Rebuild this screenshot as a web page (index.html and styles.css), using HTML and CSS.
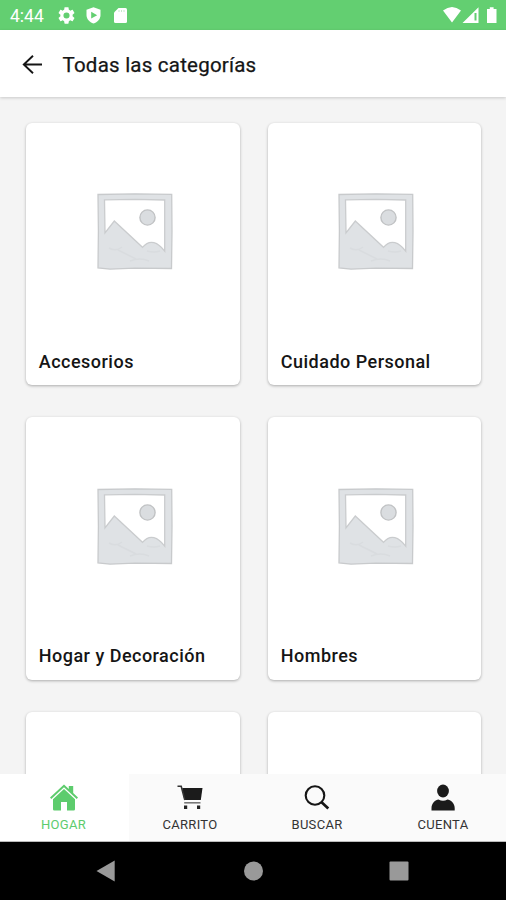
FILE: index.html
```html
<!DOCTYPE html>
<html lang="es">
<head>
<meta charset="utf-8">
<title>Todas las categorías</title>
<link rel="stylesheet" href="styles.css">
</head>
<body>
<svg class="defs" width="0" height="0" aria-hidden="true">
  <symbol id="placeholder" viewBox="0 0 76 77">
    <path d="M1 1.500 38 .8 74.700 1.300 75 38 74.500 75.500 38 75.200 13 76.200 1 74.800 1.400 38Z" fill="#dfe2e5" stroke="#c8cacc" stroke-width="1.300"/>
    <path d="M7.500 6.800 38 6.300 67.700 7V58.200C61 49.500 53 45.500 45.500 54.300L17.300 28 8 39.800Z" fill="#fff" stroke="#caccce" stroke-width="1.300"/>
    <circle cx="50.500" cy="24.500" r="7.600" fill="#dadde0" stroke="#c0c2c4" stroke-width="1.400"/>
    <path d="M12 55q7 4 13-1m8 14q10-4 19 0m-31-11 18 9m11-8q7 2 13 0" fill="none" stroke="#d9dcdf" stroke-width="1.500"/>
  </symbol>
</svg>
<div class="screen">
  <header class="status">
    <span class="clock">4:44</span>
    <svg class="gear" viewBox="2 2 20 20"><path fill="#fff" d="M19.140 12.940c.04-.3.060-.61.060-.94s-.02-.64-.07-.94l2.030-1.580c.18-.14.230-.41.120-.61l-1.920-3.320c-.12-.22-.37-.29-.59-.22l-2.390.96c-.5-.38-1.030-.7-1.620-.94L14.400 2.810c-.04-.24-.24-.41-.48-.41h-3.840c-.24 0-.43.170-.47.410l-.36 2.540c-.59.240-1.130.570-1.620.94l-2.390-.96c-.22-.08-.47 0-.59.220L2.740 8.870c-.12.210-.08.470.120.610l2.030 1.580c-.05.3-.09.630-.09.940s.02.640.070.940l-2.030 1.580c-.18.140-.23.410-.12.610l1.920 3.320c.12.220.370.290.590.220l2.390-.96c.5.380 1.030.7 1.620.94l.36 2.540c.05.240.240.410.480.410h3.840c.24 0 .44-.17.470-.41l.36-2.540c.59-.24 1.130-.56 1.620-.94l2.390.96c.22.080.470 0 .59-.22l1.920-3.320c.12-.22.070-.47-.12-.61zM12 15.600A3.600 3.600 0 1 1 12 8.400a3.600 3.600 0 0 1 0 7.200z"/></svg>
    <svg class="shield" viewBox="0 0 15 17"><path fill="#fff" d="M7.500.3 14.500 2.800V8C14.500 12 11.500 15.300 7.500 16.500 3.500 15.300.5 12 .5 8V2.800Z"/><path fill="#63cf71" d="m5.200 4.800 6 3.400-6 3.400Z"/></svg>
    <svg class="sd" viewBox="0 0 13 15"><path fill="#fff" d="M4.500 0H11.500Q13 0 13 1.500V13.500Q13 15 11.500 15H1.500Q0 15 0 13.500V4.500Z"/><path d="M5 2v2M7.500 2v2M10 2v2" stroke="#c4ebc9"/></svg>
    <svg class="signals" viewBox="0 0 55 17"><path fill="#fff" d="M0 3.500Q9-3.500 18 3.500L9 15.500ZM19.500 16 35.500.3V16Z"/><path d="M32.500 6v7.500" stroke="#63cf71" stroke-width="2"/><path fill="#fff" d="M44 2H46.800V.3H50.600V2H53.500V16H44Z"/></svg>
  </header>
  <div class="appbar">
    <svg class="back" viewBox="0 0 21 20"><path d="M20 9.500H1.500M11 .8 1.800 9.500l9.200 8.700" fill="none" stroke="#151515" stroke-width="1.900"/></svg>
    <h1>Todas las categorías</h1>
  </div>
  <main class="grid">
    <article class="card"><div class="thumb"><svg><use href="#placeholder"/></svg></div><h2>Accesorios</h2></article>
    <article class="card"><div class="thumb"><svg><use href="#placeholder"/></svg></div><h2>Cuidado Personal</h2></article>
    <article class="card"><div class="thumb"><svg><use href="#placeholder"/></svg></div><h2>Hogar y Decoración</h2></article>
    <article class="card"><div class="thumb"><svg><use href="#placeholder"/></svg></div><h2>Hombres</h2></article>
    <article class="card"></article>
    <article class="card"></article>
  </main>
  <nav class="tabs">
    <a class="tab active"><svg viewBox="0 0 28 27"><path fill="#5dcc6d" d="M14 .5 18.800 5V2H23.200V9L28 13.500 26.700 15 14 3.200 1.300 15 0 13.500ZM14 5 25 15.200V25.200Q25 26.500 23.700 26.500H17V18H11V26.500H4.300Q3 26.500 3 25.200V15.200Z"/></svg><span>HOGAR</span></a>
    <a class="tab"><svg viewBox="0 0 28 27"><path fill="#1b1b1b" d="M6.200 4H26.500L24.800 16H8.300Z"/><path d="M1.500 2.300H5.200L8.800 16" fill="none" stroke="#333" stroke-width="1.600"/><path d="M8.200 18.800H24.500" stroke="#777" stroke-width="1.600"/><path fill="#222" d="M8 21.500h3.200V25H8ZM21 21.500h3.200V25H21Z"/></svg><span>CARRITO</span></a>
    <a class="tab"><svg viewBox="0 0 28 27"><circle cx="12" cy="11.500" r="9.300" fill="none" stroke="#151515" stroke-width="2.100"/><path d="m18.300 18 7 6.500" stroke="#151515" stroke-width="2.700"/></svg><span>BUSCAR</span></a>
    <a class="tab"><svg viewBox="0 0 28 27"><ellipse cx="14" cy="7" rx="5.900" ry="6.500" fill="#1b1b1b"/><path fill="#1b1b1b" d="M2.500 26.500V24C2.500 19 6.500 16 9.500 15.500Q14 18 18.500 15.500C21.500 16 25.700 19 25.700 24V26.500Z"/></svg><span>CUENTA</span></a>
  </nav>
  <footer class="system">
    <svg viewBox="0 0 20 22"><path fill="#999" d="M.5 11 18.700.5V21.500Z"/></svg>
    <svg viewBox="0 0 20 22"><circle cx="10.500" cy="11" r="9.500" fill="#999"/></svg>
    <svg viewBox="0 0 20 22"><rect x=".5" y="1.500" width="19" height="19" rx="1" fill="#999"/></svg>
  </footer>
</div>
</body>
</html>
```
FILE: styles.css
```css
* { box-sizing: border-box; }
body { margin: 0; font-family: Roboto, "Liberation Sans", sans-serif; color: #151515; }
svg { display: block; flex: none; }
.defs { position: absolute; }
.screen { width: 506px; height: 900px; display: flex; flex-direction: column; overflow: hidden; background: #f4f4f4; }
.status { height: 30px; flex: none; display: flex; align-items: center; padding: 1px 8px 0 10px; background: #63cf71; color: #fff; }
.clock { width: 48px; font-size: 17.500px; line-height: 30px; }
.gear { width: 17px; height: 17px; }
.shield { width: 15px; height: 17px; margin-left: 11px; }
.sd { width: 13px; height: 15px; margin-left: 13px; }
.signals { width: 55px; height: 17px; margin-left: auto; }
.appbar { height: 67px; flex: none; display: flex; align-items: center; padding: 2px 22px 0; background: #fff; box-shadow: 0 1px 3px rgba(0,0,0,.18); z-index: 1; }
.back { width: 21px; height: 20px; }
h1 { margin: 0 0 0 19.500px; font-size: 20.500px; font-weight: 400; letter-spacing: .22px; line-height: 28px; -webkit-text-stroke: .25px #151515; }
.grid { flex: 1; min-height: 0; overflow: hidden; display: grid; grid-template-columns: 213.500px 213px; grid-auto-rows: 262.500px; column-gap: 28.500px; row-gap: 32px; padding: 25.500px 0 0 26px; }
.card { display: flex; flex-direction: column; background: #fff; border-radius: 6px; box-shadow: 0 1px 3px rgba(0,0,0,.3); }
.thumb { height: 218px; display: flex; align-items: center; justify-content: center; padding-left: 3.500px; }
.thumb svg { width: 76px; height: 77px; }
h2 { margin: 8px 0 0 12.800px; font-size: 18px; font-weight: 500; letter-spacing: .48px; line-height: 25px; }
.tabs { height: 68px; flex: none; display: grid; grid-template-columns: 129px 123px 131px 123px; background: #fafafa; border-bottom: 1px solid #bbb; z-index: 1; }
.tab { display: flex; flex-direction: column; align-items: center; padding: 10px 1px 0 0; font-size: 13px; line-height: 16px; letter-spacing: .3px; color: #333; }
.tab:last-child { padding-right: 3px; }
.tab svg { width: 28px; height: 27px; margin-bottom: 6px; }
.tab.active { padding-right: 2px; background: #fff; color: #5dcc6d; }
.system { height: 58px; flex: none; background: #000; display: flex; justify-content: space-between; padding: 18px 97px 0 96px; }
.system svg { width: 20px; height: 22px; }
```
